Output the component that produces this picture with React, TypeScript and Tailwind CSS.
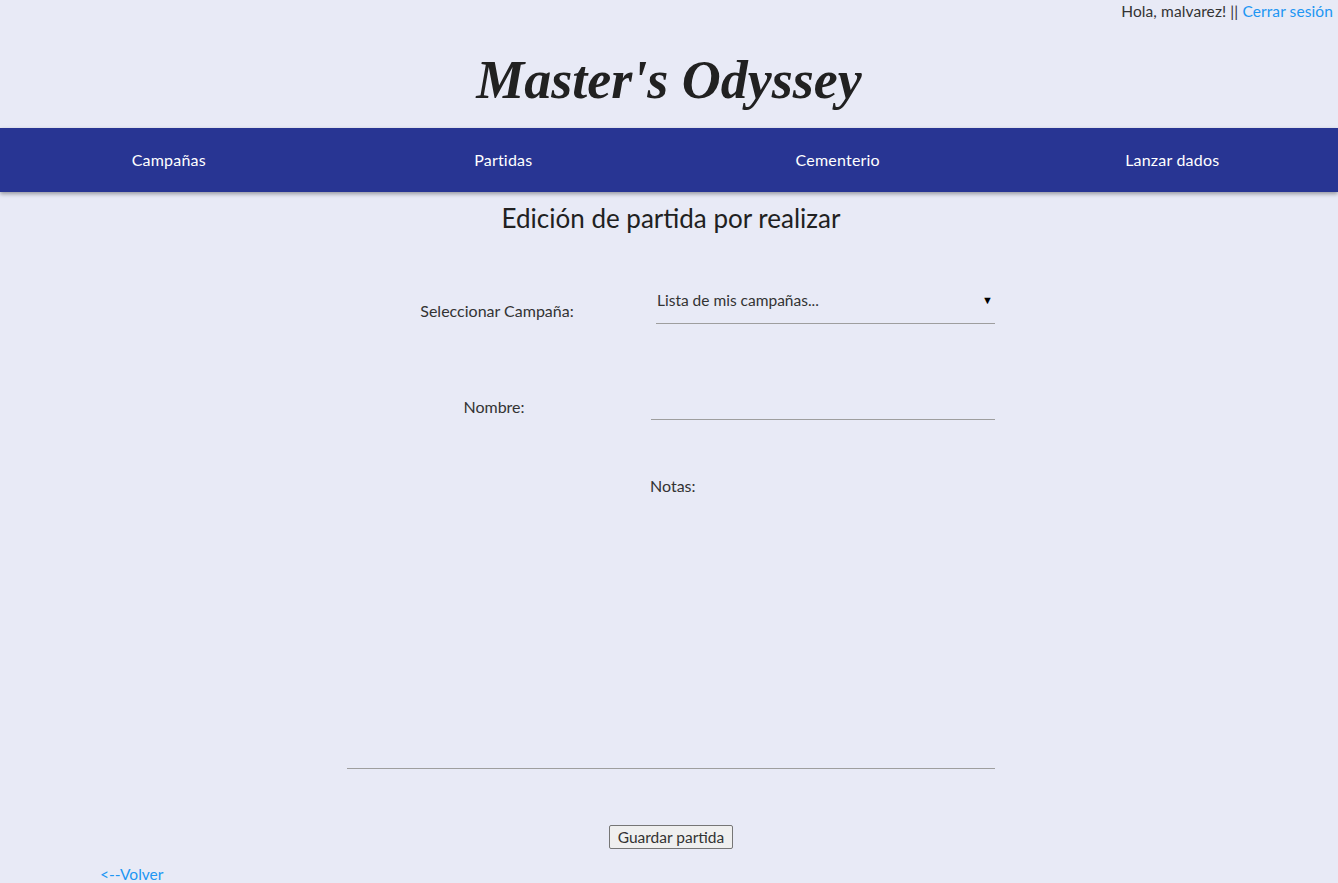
const App = () => {
  const menu = ["Campañas", "Partidas", "Cementerio", "Lanzar dados"];

  return (
    <div className="min-h-[883px] bg-[#e8eaf6] font-['Lato',sans-serif] text-[#333]">
      {/* Usuario */}
      <div className="flex justify-end pr-[5px] text-[15.5px] leading-[22px] tracking-[0.1px]">
        <span>
          Hola, malvarez! || <a href="#" className="text-[#2196f3]">Cerrar sesión</a>
        </span>
      </div>

      {/* Logo */}
      <h1 className="h-[106px] flex items-center justify-center font-['Liberation_Serif',serif] font-bold italic text-[54px] text-[#212121] pt-[10px]">
        Master's Odyssey
      </h1>

      {/* Menu */}
      <nav className="grid grid-cols-4 h-[64px] bg-[#283593] shadow-[0_2px_4px_rgba(0,0,0,0.35)] text-white text-[16px] tracking-[0.2px]">
        {menu.map((item) => (
          <a key={item} href="#" className="flex items-center justify-center pl-[3px]">
            {item}
          </a>
        ))}
      </nav>

      <h2 className="mt-[10px] text-center text-[26px] leading-[32px] text-[#212121] translate-x-[2px]">
        Edición de partida por realizar
      </h2>

      <form className="w-[648px] mx-auto translate-x-[2px] text-[16px]">
        <div className="flex">
          <label className="w-[300px] mt-[66px] leading-[22px] text-center">Seleccionar Campaña:</label>
          <div className="ml-[9px] flex-1 mt-[55px] pb-[12px] border-b border-[#9e9e9e] flex justify-between items-center leading-[22px] pl-[1px] text-[15.5px]">
            <span>Lista de mis campañas...</span>
            <span className="text-[11px] text-black pr-[2px]">▼</span>
          </div>
        </div>

        <div className="flex">
          <label className="w-[300px] mt-[72px] leading-[22px] text-center -translate-x-[3px]">Nombre:</label>
          <div className="ml-[4px] flex-1 mt-[65px] h-[31px] border-b border-[#9e9e9e]" />
        </div>

        <div className="flex">
          <label className="ml-[303px] mt-[55px] leading-[22px]">Notas:</label>
        </div>
        <div className="h-[272px] border-b border-[#9e9e9e]" />

        <div className="flex justify-center mt-[56px]">
          <button
            type="button"
            className="h-[24px] px-[8px] border border-[#767676] rounded-[2px] bg-[#efefef] text-[15.5px] leading-[20px] text-[#333]"
          >
            Guardar partida
          </button>
        </div>
      </form>

      <div className="pl-[100px] mt-[14px] pb-[4px] text-[15.5px] leading-[22px]">
        <a href="#" className="text-[#2196f3]">&lt;--Volver</a>
      </div>
    </div>
  );
};

export default App;
